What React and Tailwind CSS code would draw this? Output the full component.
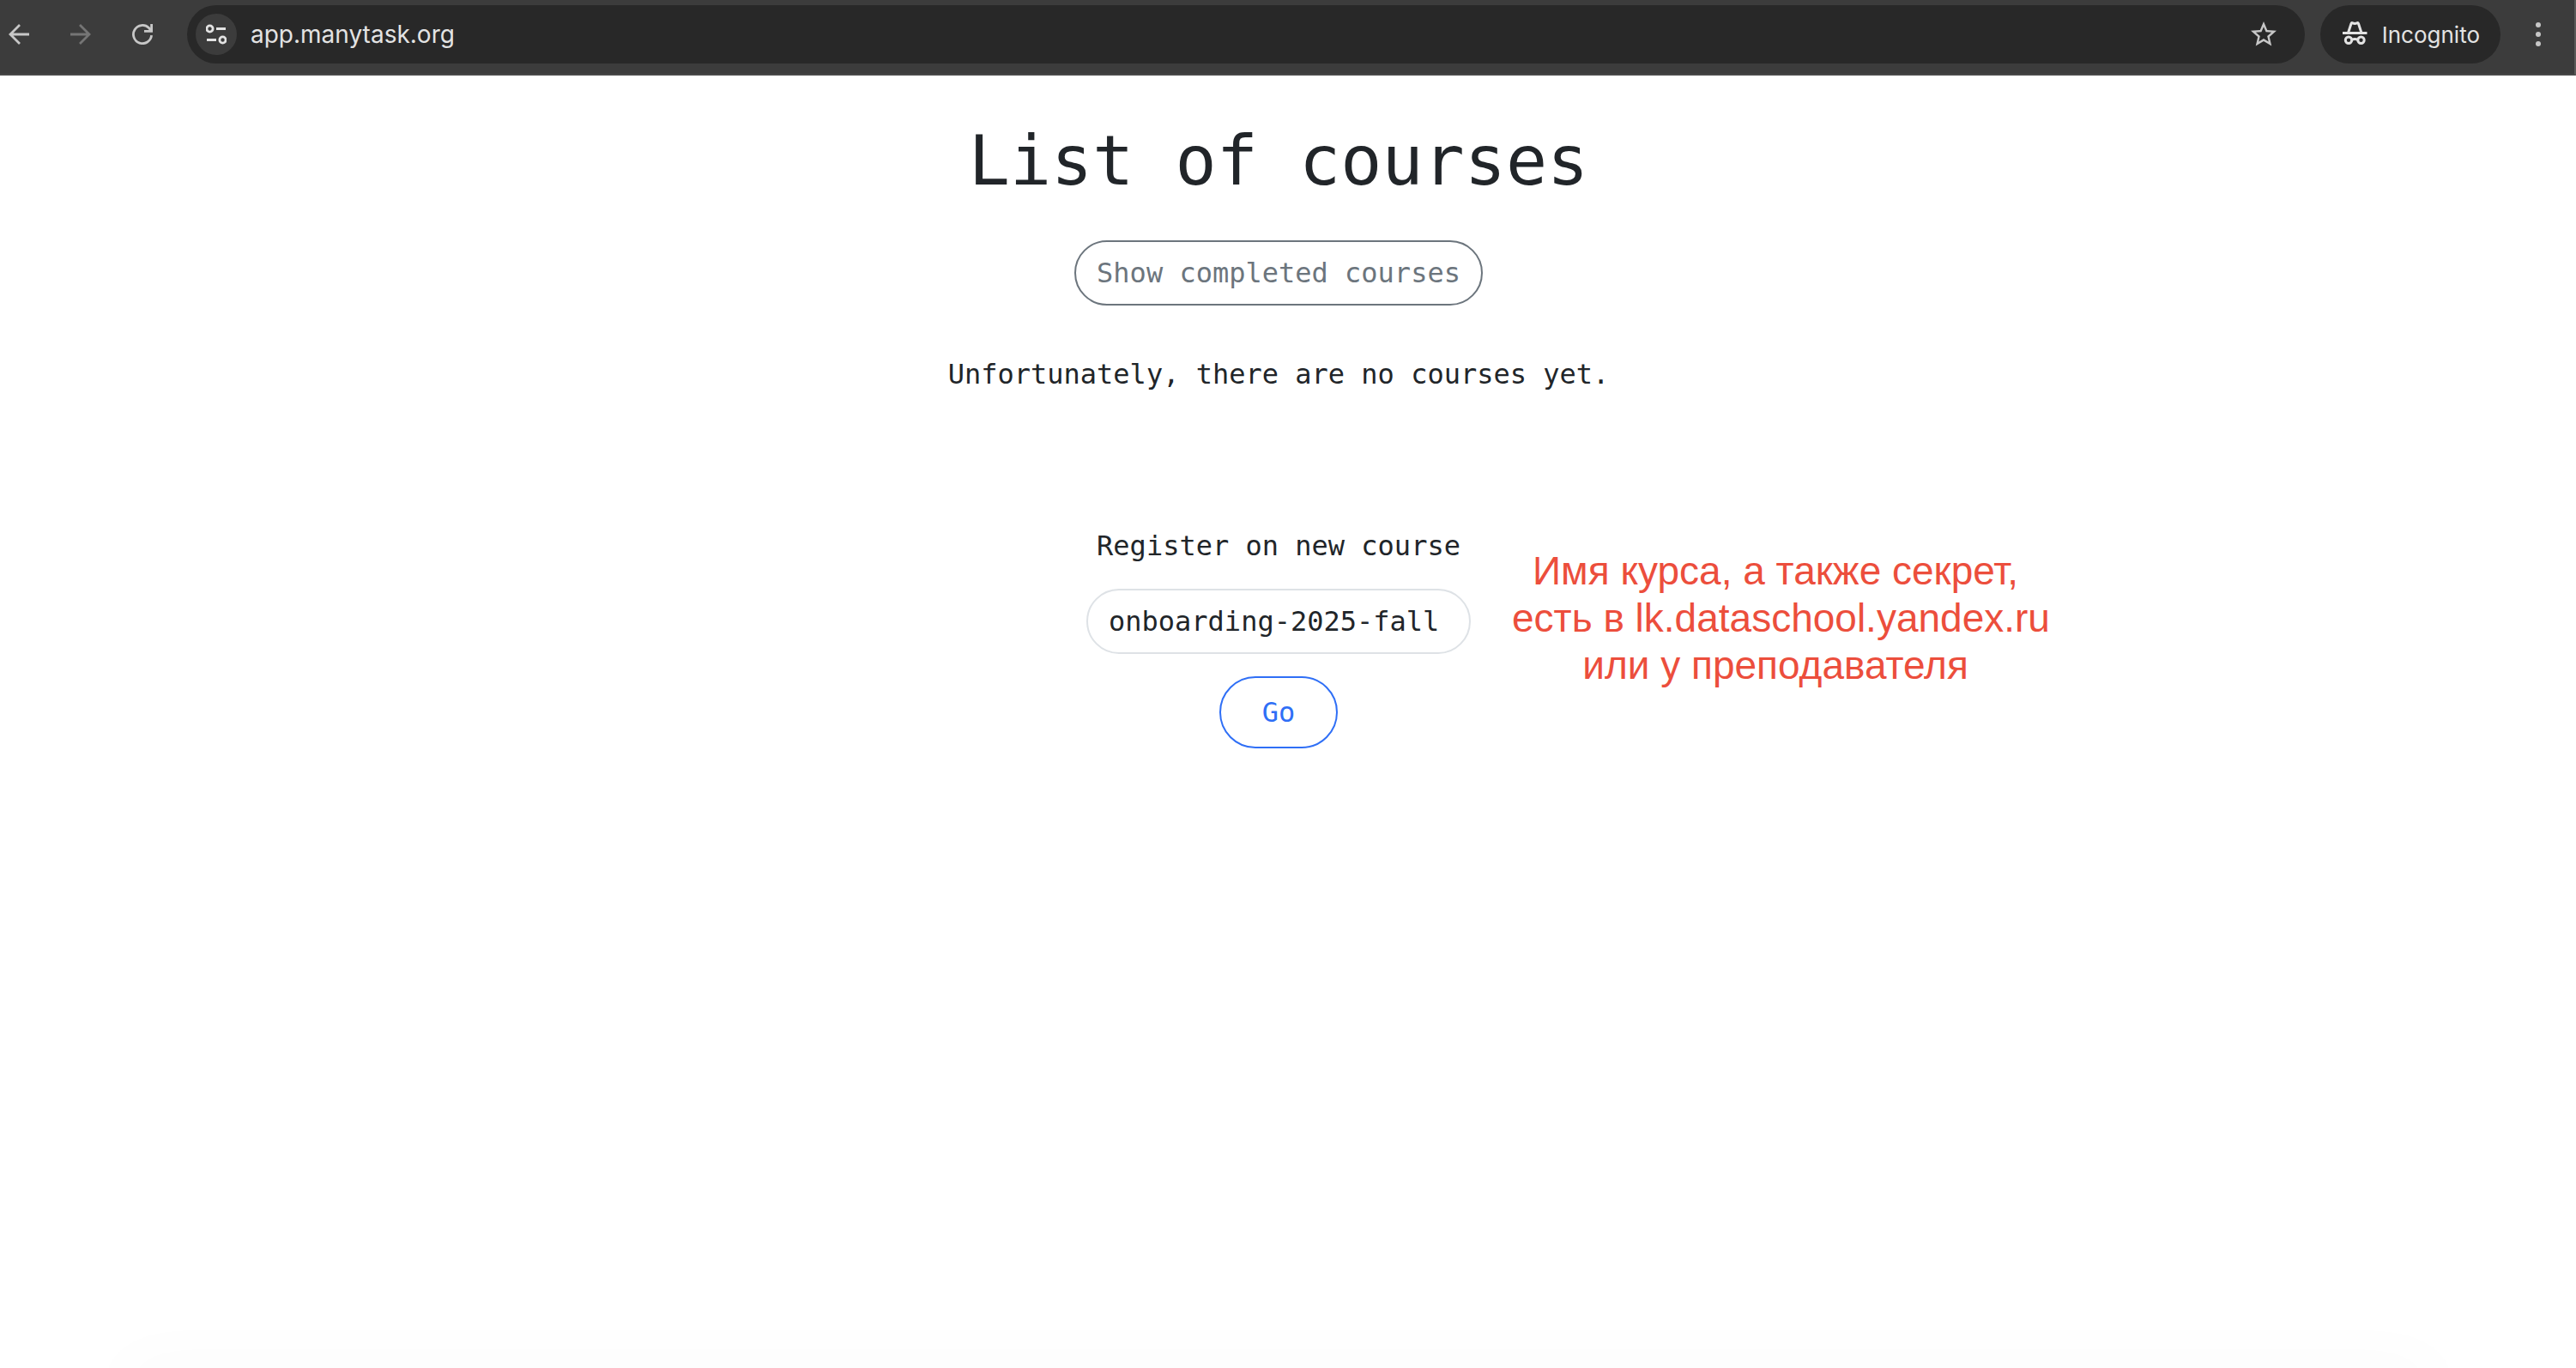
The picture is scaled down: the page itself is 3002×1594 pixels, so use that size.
function ArrowIcon({ className }) {
  return (
    <svg className={className} viewBox="0 0 24 24" fill="none" stroke="currentColor" strokeWidth="2.8" aria-hidden="true">
      <path d="M13 1L2 12l11 11M2 12h22" />
    </svg>
  );
}

function ReloadIcon() {
  return (
    <svg className="size-6" viewBox="0 0 24 24" fill="none" stroke="currentColor" strokeWidth="2.8" aria-hidden="true">
      <path d="M22.600 13.200A10.600 10.600 0 1 1 19.500 4.500L22.500 8" />
      <path d="M22.600 0v8.400H14" />
    </svg>
  );
}

function TuneIcon() {
  return (
    <svg className="size-6" viewBox="0 0 24 24" fill="none" stroke="currentColor" strokeWidth="2.8" aria-hidden="true">
      <circle cx="4.500" cy="5.500" r="3.600" />
      <path d="M12 5.500H23M1 18.500h11" />
      <circle cx="19.500" cy="18.500" r="3.600" />
    </svg>
  );
}

function StarIcon() {
  return (
    <svg className="size-9" viewBox="0 0 24 24" fill="currentColor" aria-hidden="true">
      <path d="M22 9.24l-7.19-.62L12 2 9.19 8.63 2 9.24l5.46 4.73L5.82 21 12 17.27 18.18 21l-1.63-7.03L22 9.24zM12 15.4l-3.76 2.27 1-4.28-3.32-2.88 4.38-.38L12 6.1l1.71 4.04 4.38.38-3.32 2.88 1 4.28L12 15.4z" />
    </svg>
  );
}

function IncognitoIcon() {
  return (
    <svg className="size-8" viewBox="0 0 32 32" fill="none" stroke="currentColor" strokeWidth="3" aria-hidden="true">
      <path d="M2 14.500h28.500" />
      <path d="M8.500 14.200L12 3.500Q12.500 2.300 13.800 2.800Q16.200 4 18.700 2.800Q20 2.300 20.500 3.500L24 14.200" />
      <circle cx="9" cy="22.700" r="3.700" />
      <circle cx="23.500" cy="22.700" r="3.700" />
      <path d="M12.500 22.500q3.700-1.800 7.500 0" />
    </svg>
  );
}

function Toolbar() {
  return (
    <header className="flex h-22 items-center border-r-2 border-b-2 border-r-[#5a5a58] border-b-[#484848] bg-[#3c3c3c] pt-1 pb-[10px] pl-[10px] font-['Inter','Roboto',sans-serif] text-[28px] text-[#e3e3e3]">
      <div className="flex items-center gap-12 text-[#c7c7c7]">
        <button type="button" aria-label="Back"><ArrowIcon className="size-6" /></button>
        <button type="button" aria-label="Forward" disabled className="text-[#757575]"><ArrowIcon className="size-6 rotate-180" /></button>
        <button type="button" aria-label="Reload"><ReloadIcon /></button>
      </div>
      <div className="ml-10 flex h-17 flex-1 items-center rounded-full bg-[#282828] pr-[30px] pl-[10px]">
        <button type="button" aria-label="Site information" className="flex size-12 items-center justify-center rounded-full bg-[#3c3c3c]"><TuneIcon /></button>
        <input type="text" aria-label="Address" defaultValue="app.manytask.org" className="ml-4 min-w-0 flex-1 bg-transparent outline-none" />
        <button type="button" aria-label="Bookmark this tab" className="text-[#c7c7c7]"><StarIcon /></button>
      </div>
      <button type="button" className="ml-[18px] flex h-17 items-center gap-4 rounded-full bg-[#282828] px-6 text-[26px]">
        <IncognitoIcon />
        Incognito
      </button>
      <button type="button" aria-label="Menu" className="mr-[38px] ml-10 flex w-2 flex-col items-center gap-[5px]">
        <span className="size-[6px] rounded-full bg-[#c7c7c7]" />
        <span className="size-[6px] rounded-full bg-[#c7c7c7]" />
        <span className="size-[6px] rounded-full bg-[#c7c7c7]" />
      </button>
    </header>
  );
}

export default function App() {
  return (
    <div className="flex min-h-screen flex-col bg-white">
      <Toolbar />
      <main className="flex flex-1 flex-col items-center pt-13 pr-[22px] font-['DejaVu_Sans_Mono','Liberation_Mono',monospace] text-[32px] leading-12 text-[#212529]">
        <h1 className="text-[80px] leading-24">List of courses</h1>
        <button type="button" className="mt-11 h-19 rounded-full border-2 border-[#6c757d] px-6 text-[#6c757d]">Show completed courses</button>
        <p className="mt-14">Unfortunately, there are no courses yet.</p>
        <form className="relative mt-38 flex flex-col items-center" onSubmit={(e) => e.preventDefault()}>
          <label htmlFor="course">Register on new course</label>
          <input id="course" type="text" defaultValue="onboarding-2025-fall" className="mt-[26px] h-19 w-[448px] rounded-full border-2 border-[#dee2e6] px-6 outline-none" />
          <button type="submit" className="mt-[26px] h-21 rounded-full border-2 border-[#2f6ff6] px-12 text-[#2f6ff6]">Go</button>
          <p className="absolute top-[26px] left-full ml-12 text-center font-['Liberation_Sans',sans-serif] text-[46px] leading-[55px] whitespace-pre text-[#ec4e3c]">
            {"Имя курса, а также секрет, \nесть в lk.dataschool.yandex.ru\nили у преподавателя "}
          </p>
        </form>
      </main>
      <footer className="overflow-hidden pt-14 pr-[22px]">
        <div className="mx-40 h-px translate-y-5 shadow-[0_0_80px_16px_rgba(0,0,0,0.04)]" />
      </footer>
    </div>
  );
}
